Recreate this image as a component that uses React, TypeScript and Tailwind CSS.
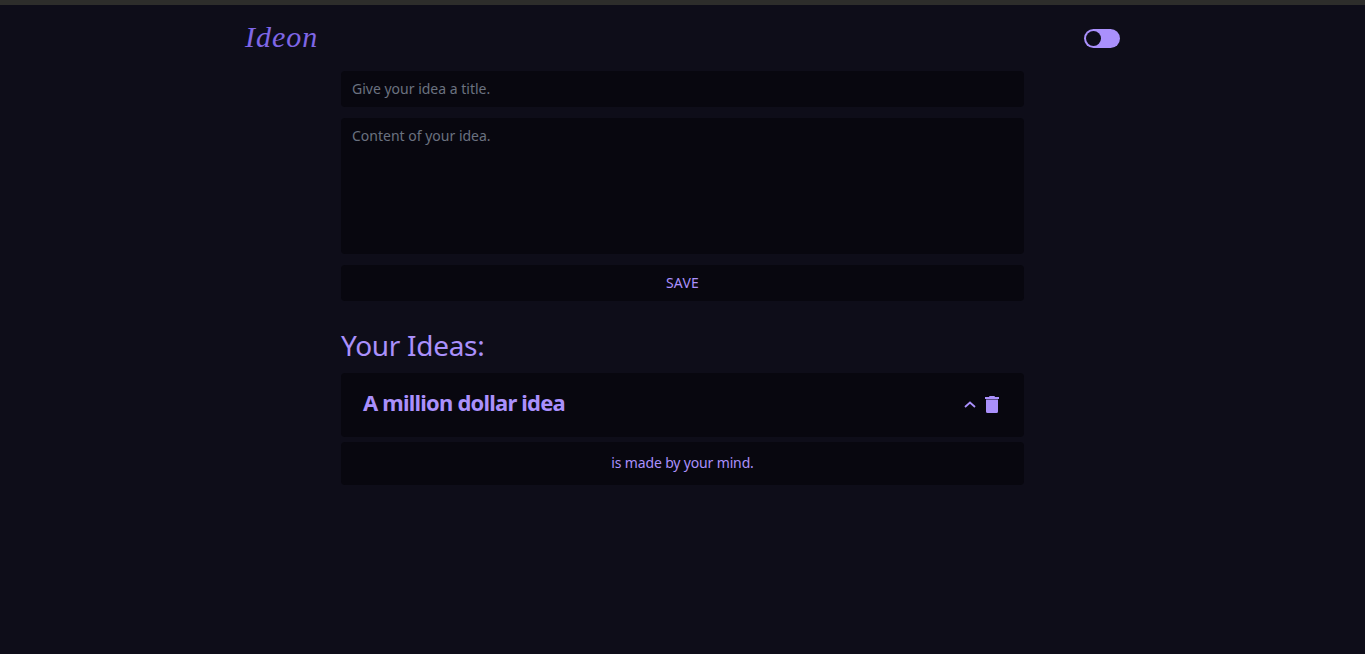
export default function App() {
  return (
    <div className="flex min-h-[654px] flex-col bg-[#0e0d19] font-['Noto_Sans',sans-serif] text-[#aa90fc]">
      <div className="h-[5px] bg-[#2d2d2b]" />

      {/* Header */}
      <header className="mx-auto flex h-[66px] w-[875px] items-center justify-between">
        <span className="-mt-[2px] font-['Liberation_Serif',serif] text-[30px] italic leading-none tracking-[1px] text-[#7f66e6]">
          Ideon
        </span>
        <div className="mt-[1px] flex h-[19px] w-9 items-center rounded-full bg-[#aa90fc] pl-[1.5px]">
          <div className="size-[15px] rounded-full bg-[#0e0d19]" />
        </div>
      </header>

      <main className="mx-auto flex w-[683px] flex-col">
        {/* Form */}
        <div className="flex h-9 items-center rounded bg-[#08070f] px-[11px] text-sm text-[#6b7280]">
          Give your idea a title.
        </div>
        <div className="mt-[11px] h-[136px] rounded bg-[#08070f] px-[11px] py-2 text-sm text-[#6b7280]">
          Content of your idea.
        </div>
        <button className="mt-[11px] h-9 rounded bg-[#08070f] text-sm tracking-[0.2px]">SAVE</button>

        {/* Ideas */}
        <h2 className="mt-[24px] text-[28px] leading-10 tracking-[-0.3px]">Your Ideas:</h2>
        <div className="mt-2 flex h-16 items-center justify-between rounded bg-[#08070f] pl-[22px] pr-[25px]">
          <h3 className="-mt-[6px] text-[22px] font-bold tracking-[-0.8px]">A million dollar idea</h3>
          <div className="-mt-[1px] flex items-center gap-[9px]">
            <svg width="12" height="7" viewBox="0 0 12 7" fill="none" stroke="currentColor" strokeWidth="1.8">
              <path d="M1 6l5-4.5L11 6" />
            </svg>
            <svg width="14" height="17" viewBox="0 0 14 17" fill="currentColor">
              <path d="M4.5 0h5l.5 1H14v2H0V1h4zM1 3.5h12v12a1.5 1.5 0 0 1-1.5 1.5h-9A1.5 1.5 0 0 1 1 15.5z" />
            </svg>
          </div>
        </div>
        <div className="mt-[5px] flex h-[43px] items-center justify-center rounded bg-[#08070f] pb-[2px] text-sm tracking-[-0.15px]">
          is made by your mind.
        </div>
      </main>
    </div>
  );
}
